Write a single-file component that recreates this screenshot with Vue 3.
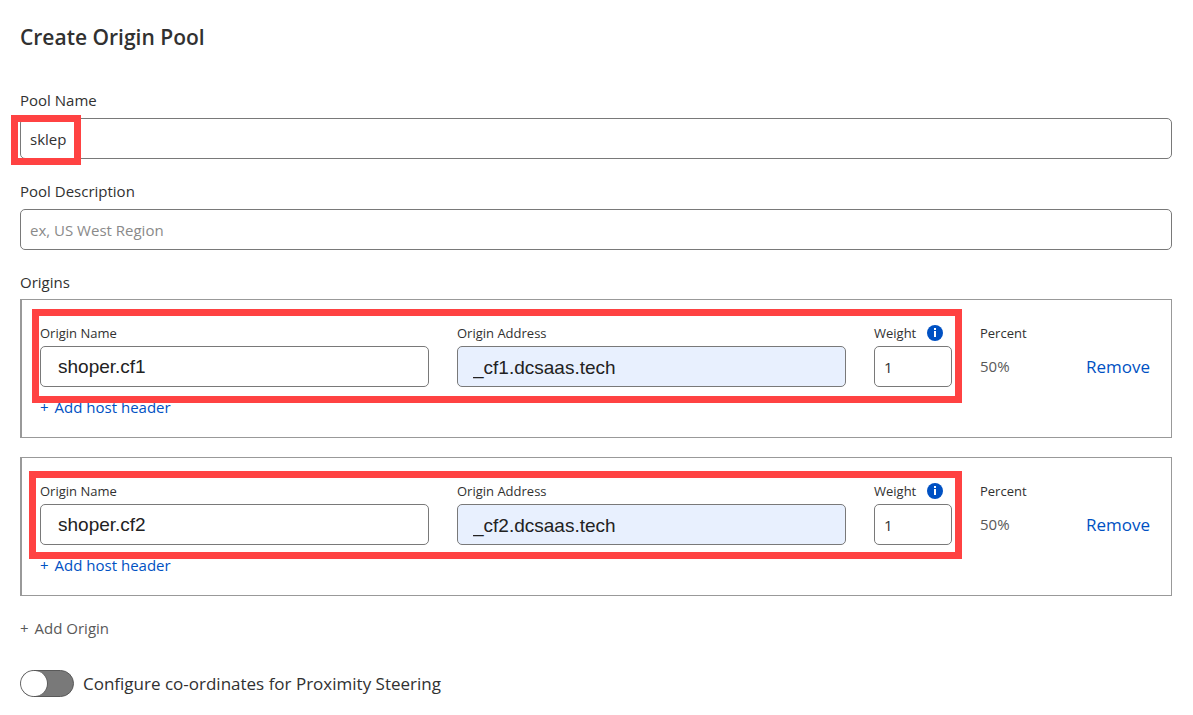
<script setup>
import { ref } from 'vue'

const poolName = ref('sklep')
const description = ref('')
const proximity = ref(false)
const origins = ref([
  { id: 1, name: 'shoper.cf1', address: '_cf1.dcsaas.tech', weight: '1', percent: '50%' },
  { id: 2, name: 'shoper.cf2', address: '_cf2.dcsaas.tech', weight: '1', percent: '50%' },
])
</script>

<template>
  <main class="page">
    <h1>Create Origin Pool</h1>

    <div class="field">
      <label for="pool-name">Pool Name</label>
      <div class="control">
        <input id="pool-name" v-model="poolName" type="text" />
        <span class="mark mark-name" aria-hidden="true"></span>
      </div>
    </div>

    <div class="field">
      <label for="pool-desc">Pool Description</label>
      <input id="pool-desc" v-model="description" type="text" placeholder="ex, US West Region" />
    </div>

    <h2>Origins</h2>
    <section v-for="o in origins" :key="o.id" class="origin">
      <div class="grid">
        <div class="cell">
          <label :for="'name-' + o.id">Origin Name</label>
          <input :id="'name-' + o.id" v-model="o.name" class="typed" type="text" />
        </div>
        <div class="cell">
          <label :for="'address-' + o.id">Origin Address</label>
          <input :id="'address-' + o.id" v-model="o.address" class="typed filled" type="text" />
        </div>
        <div class="cell">
          <div class="weight-head">
            <label :for="'weight-' + o.id">Weight</label>
            <svg class="info" viewBox="0 0 16 16" aria-hidden="true">
              <circle cx="8" cy="8" r="8" fill="#0051c3" />
              <rect x="7" y="3" width="2" height="2" fill="#fff" />
              <rect x="7" y="6" width="2" height="6" fill="#fff" />
            </svg>
          </div>
          <input :id="'weight-' + o.id" v-model="o.weight" class="weight" type="text" />
        </div>
        <div class="cell">
          <span class="head">Percent</span>
          <span class="percent">{{ o.percent }}</span>
        </div>
        <button class="remove" type="button">Remove</button>
      </div>
      <button class="link host" type="button"><span>+</span> <span>Add host header</span></button>
      <span class="mark" :class="'mark-row-' + o.id" aria-hidden="true"></span>
    </section>

    <button class="link add" type="button"><span>+</span> <span>Add Origin</span></button>

    <label class="toggle">
      <input v-model="proximity" type="checkbox" role="switch" />
      <span>Configure co-ordinates for Proximity Steering</span>
    </label>
  </main>
</template>

<style>
body {
  margin: 0;
  background: #fff;
}
</style>

<style scoped>
.page {
  padding: 20px 21px 16px 20px;
  color: #313131;
  font-family: "Segoe UI", "Open Sans", "Noto Sans", sans-serif;
  font-size: 15px;
  line-height: 22px;
}

* {
  box-sizing: border-box;
}

h1 {
  margin: 0 0 35px;
  font-size: 21px;
  font-weight: 600;
  line-height: 34px;
}

h2 {
  margin: 0 0 6px;
  font-size: 15px;
  font-weight: 400;
}

.field {
  display: flex;
  flex-direction: column;
  gap: 7px;
  margin-bottom: 21px;
}

.control {
  position: relative;
  display: flex;
}

input[type="text"] {
  width: 100%;
  min-width: 0;
  height: 41px;
  padding: 0 9px;
  border: 1px solid #797979;
  border-radius: 5px;
  background: #fff;
  color: #313131;
  font: inherit;
}

input::placeholder {
  color: #8a8a8a;
  opacity: 1;
}

.origin {
  position: relative;
  margin-bottom: 19px;
  padding: 24px 21px 19px 18px;
  border: 1px solid #999;
  border-left-width: 2px;
}

.grid {
  display: grid;
  grid-template-columns: 1fr 1fr 78px 78px 64px;
  gap: 28px;
}

.cell {
  display: flex;
  flex-direction: column;
  gap: 4px;
  min-width: 0;
  font-size: 13px;
  line-height: 18px;
}

.cell input.typed {
  padding: 0 17px;
  color: #222;
  font-family: "Liberation Sans", Arial, sans-serif;
  font-size: 19px;
}

.cell input.filled {
  padding: 2px 15px 0;
  background: #e8f0fe;
}

.cell input.weight {
  font-size: 15px;
}

.weight-head {
  display: flex;
  align-items: center;
  justify-content: space-between;
  padding-right: 9px;
}

.info {
  width: 16px;
  height: 16px;
}

.percent {
  color: #595959;
  font-size: 15px;
  line-height: 41px;
}

button {
  padding: 0;
  border: 0;
  background: none;
  color: #0051c3;
  font: inherit;
  text-align: left;
  white-space: nowrap;
  cursor: pointer;
}

.remove {
  align-self: end;
  font-size: 17px;
  line-height: 41px;
}

.link {
  display: flex;
  gap: 6px;
}

.host {
  margin-top: 9px;
}

.mark {
  position: absolute;
  border: 7px solid #ff4242;
  pointer-events: none;
}

.mark-name {
  top: -3px;
  left: -9px;
  width: 70px;
  height: 50px;
}

.mark-row-1 {
  top: 9px;
  right: 209px;
  left: 10px;
  height: 94px;
}

.mark-row-2 {
  top: 13px;
  right: 209px;
  left: 7px;
  height: 88px;
}

.add {
  margin-top: 21px;
  color: #595959;
}

.toggle {
  display: flex;
  align-items: center;
  gap: 9px;
  margin-top: 31px;
  font-size: 17px;
  line-height: 27px;
}

.toggle input {
  flex: none;
  width: 54px;
  height: 27px;
  margin: 0;
  border: 1px solid #595959;
  border-radius: 14px;
  background: #797979;
  appearance: none;
  cursor: pointer;
}

.toggle input::before {
  display: block;
  width: 26px;
  height: 25px;
  border-right: 1px solid #595959;
  border-radius: 13px;
  background: #fff;
  content: "";
}

.toggle input:checked::before {
  margin-left: auto;
}
</style>
